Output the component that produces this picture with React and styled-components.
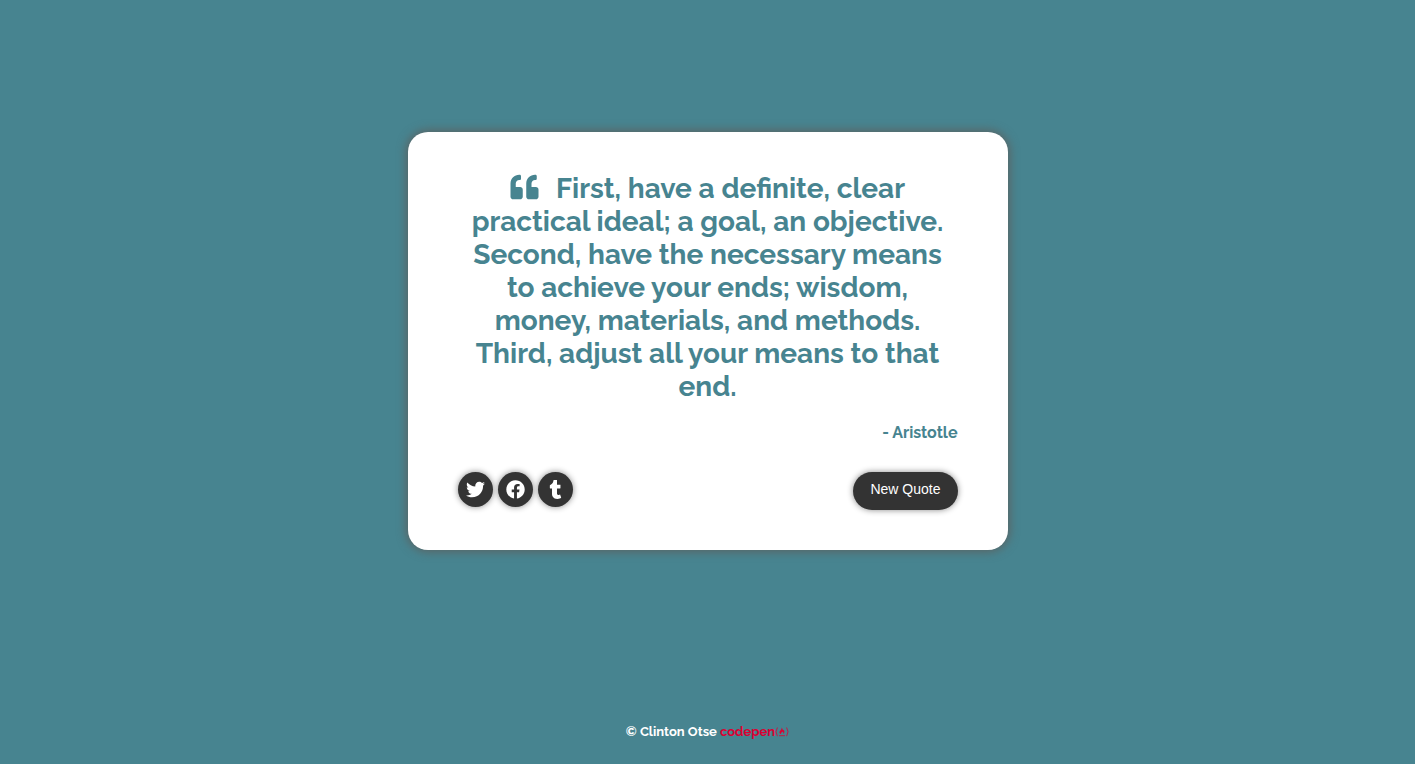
import React from "react";
import styled, { createGlobalStyle } from "styled-components";
import { FaQuoteLeft, FaTwitter, FaFacebook, FaTumblr } from "react-icons/fa";

const GlobalStyle = createGlobalStyle`
  *, *::before, *::after { box-sizing: border-box; }
  body {
    margin: 0;
    background: #478490;
    font-family: Raleway, Lato, sans-serif;
  }
`;

const Page = styled.div`
  display: flex;
  flex-direction: column;
  min-height: 100vh;
`;

const Main = styled.main`
  flex: 1;
  display: flex;
  align-items: center;
  justify-content: center;
`;

const Card = styled.section`
  width: 100%;
  max-width: 600px;
  padding: 40px 50px;
  border-radius: 20px;
  background: #fff;
  color: #478490;
  box-shadow: 0 0 10px 2px #5a6464;
`;

const Quote = styled.blockquote`
  margin: 0;
  text-align: center;
  font-size: 28px;
  font-weight: 700;
  line-height: 33px;
`;

const QuoteMark = styled(FaQuoteLeft)`
  width: 29px;
  height: 28px;
  margin-right: 17px;
  vertical-align: -3px;
`;

const Author = styled.p`
  margin: 20px 0 30px;
  text-align: right;
  font-size: 16px;
  font-weight: 700;
  line-height: 19px;
`;

const Actions = styled.div`
  display: flex;
  justify-content: space-between;
  align-items: flex-start;
`;

const Socials = styled.div`
  display: flex;
  gap: 5px;
`;

const SocialLink = styled.a`
  display: flex;
  align-items: center;
  justify-content: center;
  width: 35px;
  height: 35px;
  border-radius: 50%;
  background: #333;
  color: #fff;
  font-size: 19px;
  box-shadow: 0 0 6px #888;
`;

const NewQuote = styled.button`
  height: 38px;
  padding: 0 17px 4px;
  border: 0;
  border-radius: 20px;
  background: #333;
  color: #fff;
  font-family: "Liberation Sans", Arial, sans-serif;
  font-size: 14px;
  box-shadow: 0 0 6px #888;
  cursor: pointer;
`;

const Footer = styled.footer`
  padding: 25px 0 24px;
  margin-top: 17px;
  text-align: center;
  color: #fff;
  font-size: 13px;
  font-weight: 700;
  line-height: 16px;
`;

const FooterLink = styled.a`
  color: #dc0032;
  text-decoration: none;
`;

const CampIcon = styled.svg`
  width: 14px;
  height: 12px;
  vertical-align: -2px;
`;

export default function App() {
  return (
    <Page>
      <GlobalStyle />
      <Main>
        <Card>
          <Quote>
            <QuoteMark aria-hidden="true" />
            First, have a definite, clear practical ideal; a goal, an objective.
            Second, have the necessary means to achieve your ends; wisdom,
            money, materials, and methods. Third, adjust all your means to that
            end.
          </Quote>
          <Author>- Aristotle</Author>
          <Actions>
            <Socials>
              <SocialLink href="#twitter" aria-label="Twitter"><FaTwitter /></SocialLink>
              <SocialLink href="#facebook" aria-label="Facebook"><FaFacebook /></SocialLink>
              <SocialLink href="#tumblr" aria-label="Tumblr"><FaTumblr /></SocialLink>
            </Socials>
            <NewQuote type="button">New Quote</NewQuote>
          </Actions>
        </Card>
      </Main>
      <Footer>
        © Clinton Otse{" "}
        <FooterLink href="#codepen">
          codepen
          <CampIcon viewBox="0 0 14 12" aria-hidden="true">
            <path d="M2.4 1.5Q-0.4 5.8 2.4 10.2M11.6 1.5Q14.4 5.8 11.6 10.2" fill="none" stroke="currentColor" strokeWidth="0.8" />
            <path d="M6.6 1.6C7.6 2.8 7.4 3.8 8.2 4.4C8.5 4.2 8.5 3.9 8.4 3.6C9.6 4.9 9.9 7 8.3 8.1C8.6 7 8.2 6.2 7.3 5.6C7 6.4 5.9 6.9 6 8.1C3.6 6.9 4.5 5.2 5.6 4.2C6.4 3.4 6.8 2.6 6.6 1.6Z" fill="currentColor" />
            <path d="M4 9.7H10" stroke="currentColor" strokeWidth="0.8" />
          </CampIcon>
        </FooterLink>
      </Footer>
    </Page>
  );
}
